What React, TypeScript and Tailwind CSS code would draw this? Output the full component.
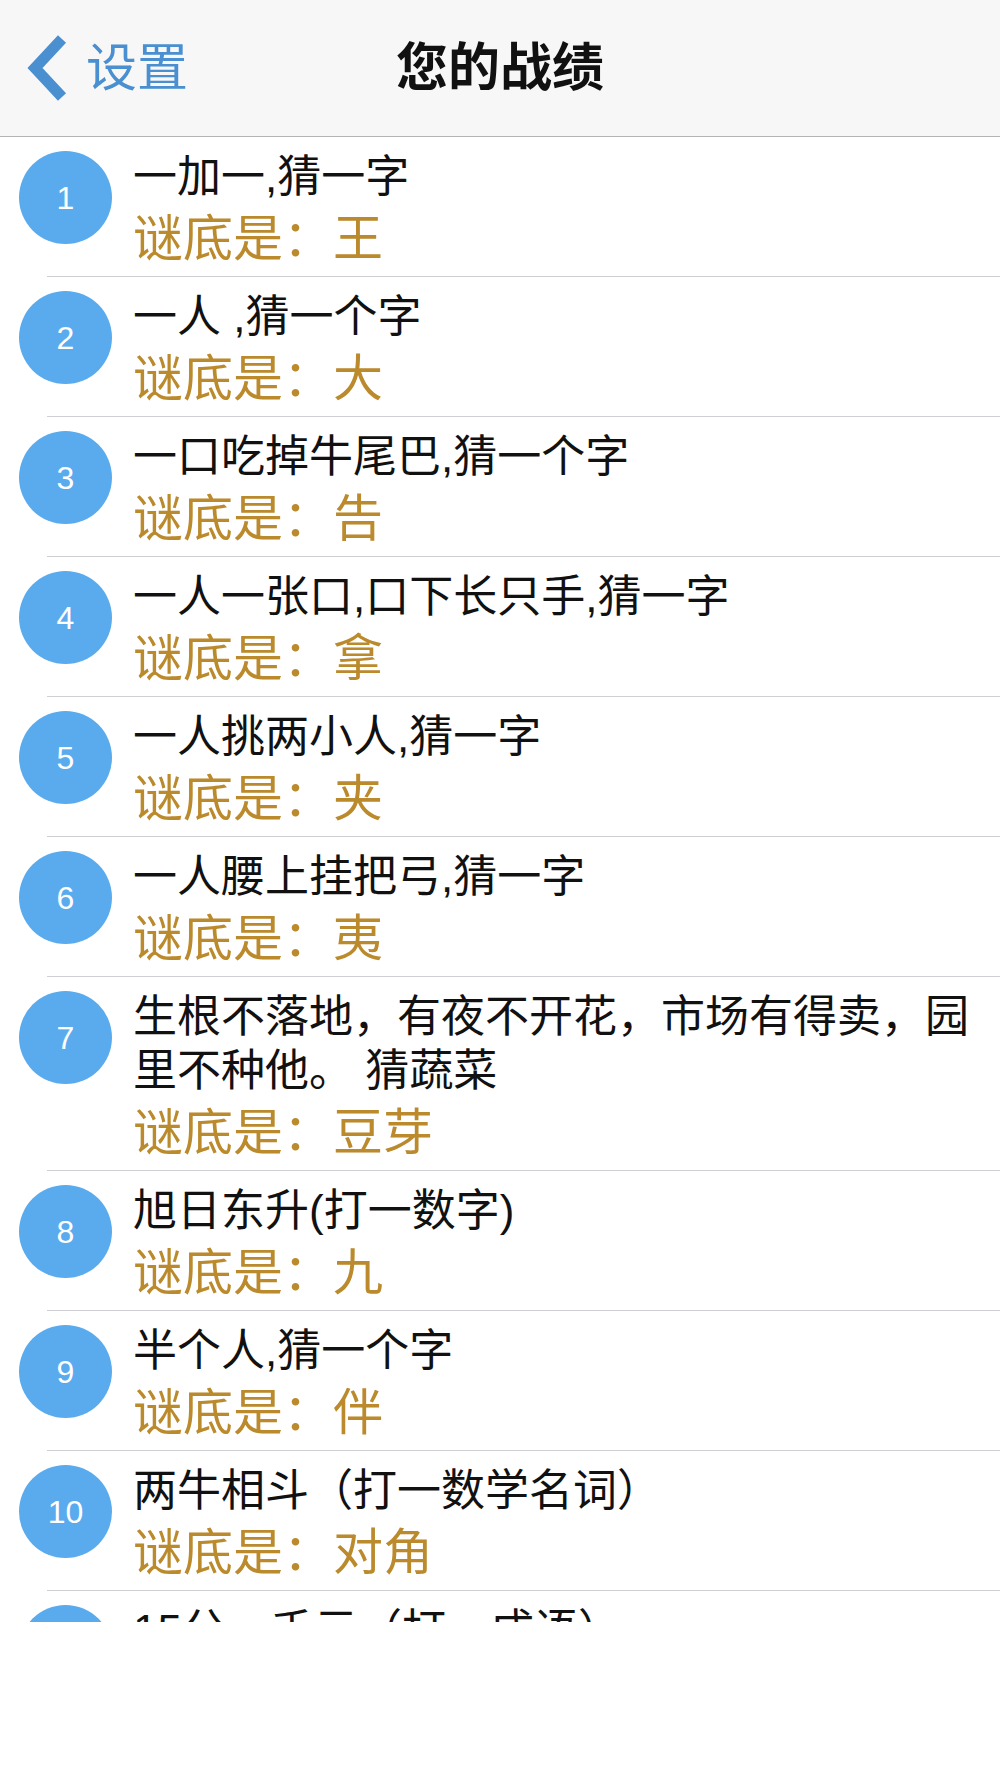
import React from "react";

type Riddle = {
  question: string;
  answer: string;
};

const riddles: Riddle[] = [
  { question: "一加一,猜一字", answer: "王" },
  { question: "一人 ,猜一个字", answer: "大" },
  { question: "一口吃掉牛尾巴,猜一个字", answer: "告" },
  { question: "一人一张口,口下长只手,猜一字", answer: "拿" },
  { question: "一人挑两小人,猜一字", answer: "夹" },
  { question: "一人腰上挂把弓,猜一字", answer: "夷" },
  {
    question: "生根不落地，有夜不开花，市场有得卖，园里不种他。 猜蔬菜",
    answer: "豆芽",
  },
  { question: "旭日东升(打一数字)", answer: "九" },
  { question: "半个人,猜一个字", answer: "伴" },
  { question: "两牛相斗（打一数学名词）", answer: "对角" },
  { question: "15分一千元（打一成语）", answer: "一刻千金" },
];

export default function App() {
  return (
    <div className="h-[1778px] w-full overflow-hidden bg-white font-['Liberation_Sans','Noto_Sans_CJK_SC',sans-serif]">
      <header className="grid h-[137px] grid-cols-[1fr_auto_1fr] items-center border-b border-[#b4b4b6] bg-[#f7f7f8]">
        <div className="flex items-center pl-[27px]">
          <svg
            width="40"
            height="68"
            viewBox="0 0 40 68"
            className="shrink-0"
          >
            <path
              d="M35 5 L8 34 L35 63"
              fill="none"
              stroke="#4a8fd0"
              strokeWidth="11"
            />
          </svg>
          <span className="ml-[19px] text-[51px] leading-none text-[#4a8fd0]">
            设置
          </span>
        </div>

        <h1 className="text-[52px] font-bold leading-none text-[#111]">
          您的战绩
        </h1>

        <div />
      </header>

      <div className="h-[1485px] overflow-hidden">
        {riddles.map((item, index) => (
          <RiddleRow
            key={index}
            index={index + 1}
            question={item.question}
            answer={item.answer}
          />
        ))}
      </div>
    </div>
  );
}

type RiddleRowProps = {
  index: number;
  question: string;
  answer: string;
};

function RiddleRow({ index, question, answer }: RiddleRowProps) {
  return (
    <div>
      <div className="flex items-start pl-[19px]">
        <div className="mt-[14px] flex h-[93px] w-[93px] shrink-0 items-center justify-center rounded-full bg-[#5aabee] text-[32px] text-white">
          {index}
        </div>

        <div className="ml-[21px] min-w-0 flex-1 pt-[13px] pb-[7px] pr-[20px]">
          <p className="text-[44px] leading-[54px] text-[#111]">
            {question}
          </p>
          <p className="mt-[5px] text-[50px] leading-[60px] text-[#bb8a2c]">
            谜底是：{answer}
          </p>
        </div>
      </div>

      <div className="ml-[47px] h-px bg-[#cfcfd3]" />
    </div>
  );
}
